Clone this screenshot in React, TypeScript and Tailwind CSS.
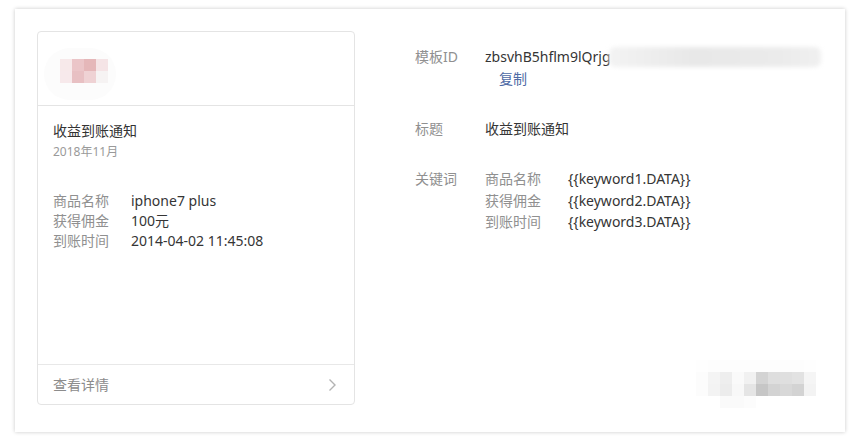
import React from "react";

const avatar = [
  ["#f7e9ea", "#ebc5c8", "#e5b7b9", "#f5e4e6"],
  ["#f7e9eb", "#e8c0c3", "#efd2d4", "#f6f3f3"],
];

const mosaic = [
  ["#fefefe", "#fdfdfd", "#fdfdfd", "#fdfdfd", "#fdfdfd", "#fdfdfd", "#fdfdfd", "#fdfdfd", "#fdfdfd", "#fefefe"],
  ["#fcfcfc", "#f4f4f4", "#eeeeee", "#fafafa", "#f1f1f1", "#d3d3d3", "#dedede", "#dfdfdf", "#e2e2e2", "#f5f5f5"],
  ["#fcfcfc", "#f3f3f3", "#ececec", "#f8f8f8", "#e5e5e5", "#c6c6c6", "#d3d3d3", "#d8d8d8", "#d3d3d3", "#f3f3f3"],
  ["#ffffff", "#ffffff", "#fafafa", "#fafafa", "#fcfcfc", "#ffffff", "#ffffff", "#ffffff", "#ffffff", "#ffffff"],
];

export default function App() {
  const font = { fontFamily: '"Noto Sans", "Noto Sans CJK SC", sans-serif' };
  return (
    <div className="w-[860px] h-[441px] bg-white pt-[9px] pl-[15px]" style={font}>
      <div className="w-[830px] h-[423px] bg-white shadow-[0_0_4px_rgba(0,0,0,0.22)] flex pt-[22px] pl-[22px]">
        {/* Card */}
        <div className="w-[318px] h-[374px] border border-[#e4e4e4] rounded-[4px] flex flex-col">
          <div className="h-[74px] border-b border-[#e4e4e4] flex items-center pl-[22px] relative">
            <div className="absolute left-[6px] top-[16px] w-[72px] h-[52px] rounded-full bg-[#fcfcfc]" />
            <div className="relative grid grid-cols-[12px_12px_12px_12px] mt-[4px]">
              {avatar.flat().map((c, i) => (
                <div key={i} className="w-[12px] h-[12px]" style={{ backgroundColor: c }} />
              ))}
            </div>
          </div>
          <div className="flex-1 pl-[15px] pt-[15px]">
            <div className="text-[14px] leading-[20px] text-[#333333]">收益到账通知</div>
            <div className="text-[12px] leading-[18px] text-[#9a9a9a] mt-[2px]">2018年11月</div>
            <div className="mt-[30px] text-[14px] leading-[20px]">
              <div className="flex">
                <span className="w-[78px] text-[#909090]">商品名称</span>
                <span className="text-[#353535]">iphone7 plus</span>
              </div>
              <div className="flex">
                <span className="w-[78px] text-[#909090]">获得佣金</span>
                <span className="text-[#353535]">100元</span>
              </div>
              <div className="flex">
                <span className="w-[78px] text-[#909090]">到账时间</span>
                <span className="text-[#353535]">2014-04-02 11:45:08</span>
              </div>
            </div>
          </div>
          <div className="h-[40px] border-t border-[#e8e8e8] flex items-center justify-between pl-[15px] pr-[17px]">
            <span className="text-[14px] text-[#8c8c8c]">查看详情</span>
            <svg width="9" height="14" viewBox="0 0 9 14" fill="none">
              <path d="M1.5 1.5 L7 7 L1.5 12.5" stroke="#b3b3b3" strokeWidth="1.4" />
            </svg>
          </div>
        </div>

        {/* Right */}
        <div className="flex-1 pl-[60px] pt-[15px] flex flex-col text-[14px]">
          <div className="flex leading-[22px]">
            <span className="w-[70px] text-[#909090]">模板ID</span>
            <div>
              <div className="flex items-center text-[#353535] whitespace-nowrap">
                <span>zbsvhB5hflm9lQrjg</span>
                <span className="inline-block w-[212px] h-[20px] -ml-[2px] bg-[linear-gradient(90deg,#f3f3f3,#e8e8e8_40%,#ebebeb_80%,#f0f0f0)] blur-[2px] rounded-[6px]" />
              </div>
              <div className="pl-[14px] text-[#4e6aa5]">复制</div>
            </div>
          </div>
          <div className="flex leading-[22px] mt-[28px]">
            <span className="w-[70px] text-[#909090]">标题</span>
            <span className="text-[#353535]">收益到账通知</span>
          </div>
          <div className="flex leading-[21.5px] mt-[28px]">
            <span className="w-[70px] text-[#909090]">关键词</span>
            <div>
              {["商品名称", "获得佣金", "到账时间"].map((k, i) => (
                <div key={k} className="flex">
                  <span className="w-[83px] text-[#909090]">{k}</span>
                  <span className="text-[#353535]">{`{{keyword${i + 1}.DATA}}`}</span>
                </div>
              ))}
            </div>
          </div>
          <div className="mt-auto mb-[24px] self-end mr-[29px] grid grid-cols-[repeat(10,12px)]">
            {mosaic.flat().map((c, i) => (
              <div key={i} className="w-[12px] h-[12px]" style={{ backgroundColor: c }} />
            ))}
          </div>
        </div>
      </div>
    </div>
  );
}
